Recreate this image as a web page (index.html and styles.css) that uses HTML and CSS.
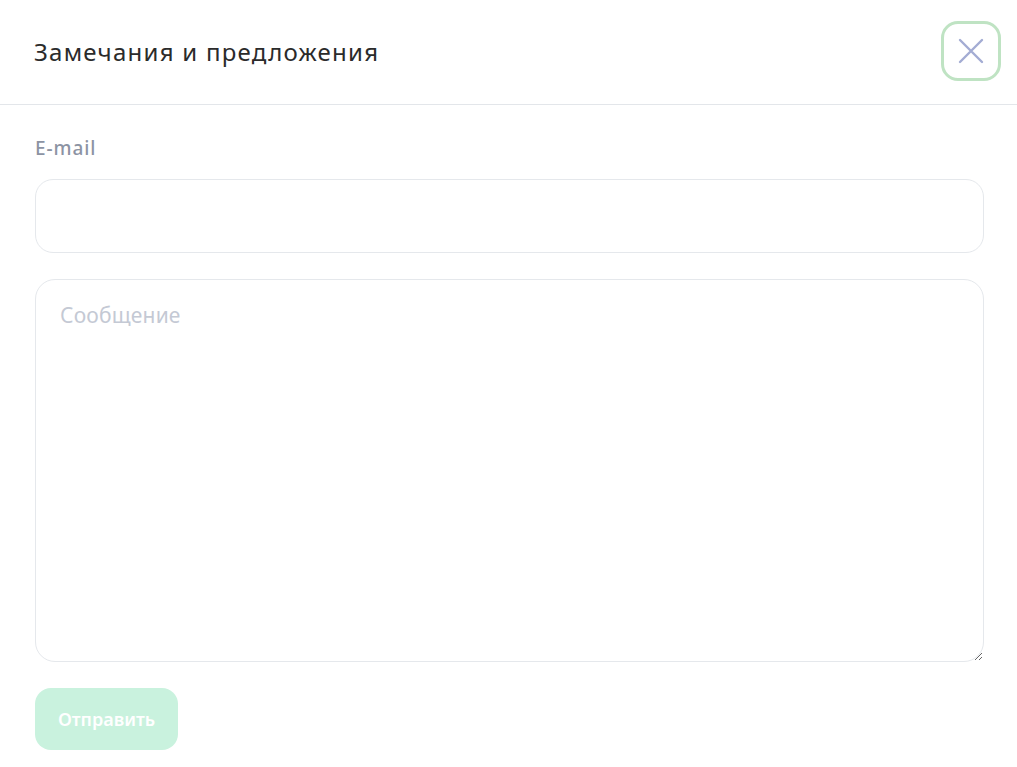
FILE: index.html
```html
<!DOCTYPE html>
<html lang="ru">
<head>
<meta charset="utf-8">
<link rel="stylesheet" href="styles.css">
</head>
<body>
<div class="modal">
  <header class="head">
    <h1 class="title">Замечания и предложения</h1>
    <button class="close" type="button" aria-label="Закрыть">
      <svg width="28" height="28" viewBox="0 0 28 28"><path d="M3 3L25 25M25 3L3 25" stroke="#a3acd3" stroke-width="2.4" stroke-linecap="round" fill="none"/></svg>
    </button>
  </header>
  <form class="body">
    <label class="label" for="email">E-mail</label>
    <input class="input" id="email" type="text">
    <textarea class="area" placeholder="Сообщение"></textarea>
    <div class="actions"><button class="send" type="button">Отправить</button></div>
  </form>
</div>
</body>
</html>
```

FILE: styles.css
```css
* { box-sizing: border-box; }
html, body { margin: 0; padding: 0; background: #fff; }
body { font-family: "Noto Sans", "DejaVu Sans", sans-serif; color: #222; }
.modal { width: 1017px; height: 767px; background: #fff; }
.head {
  height: 105px;
  border-bottom: 1px solid #e3e6ea;
  display: flex;
  align-items: center;
  justify-content: space-between;
  padding: 0 16px 2px 34px;
}
.title { margin: 0; font-size: 24px; font-weight: 400; color: #2b2b2b; letter-spacing: 1.25px; }
.close {
  width: 60px; height: 60px;
  border: 3px solid #bfe3c3;
  border-radius: 17px;
  background: #fff;
  display: flex; align-items: center; justify-content: center;
  padding: 0;
}
.body { display: flex; flex-direction: column; padding: 30px 33px 0 35px; }
.label { font-size: 19px; font-weight: 500; color: #8c93a3; line-height: 26px; letter-spacing: 0.9px; }
.input {
  margin-top: 18px;
  height: 74px;
  border: 1px solid #e5e8ec;
  border-radius: 18px;
  outline: none;
}
.area {
  margin-top: 26px;
  height: 383px;
  border: 1px solid #e5e8ec;
  border-radius: 20px;
  padding: 21px 24px;
  font-family: inherit;
  font-size: 21px;
  letter-spacing: 0.2px;
  outline: none;
  resize: vertical;
}
.area::placeholder { color: #c4c9d4; }
.actions { margin-top: 26px; }
.send {
  width: 143px; height: 62px;
  border: none;
  border-radius: 16px;
  background: #c9f2de;
  color: #fff;
  font-family: inherit;
  font-size: 18px;
  font-weight: 600;
}
```
